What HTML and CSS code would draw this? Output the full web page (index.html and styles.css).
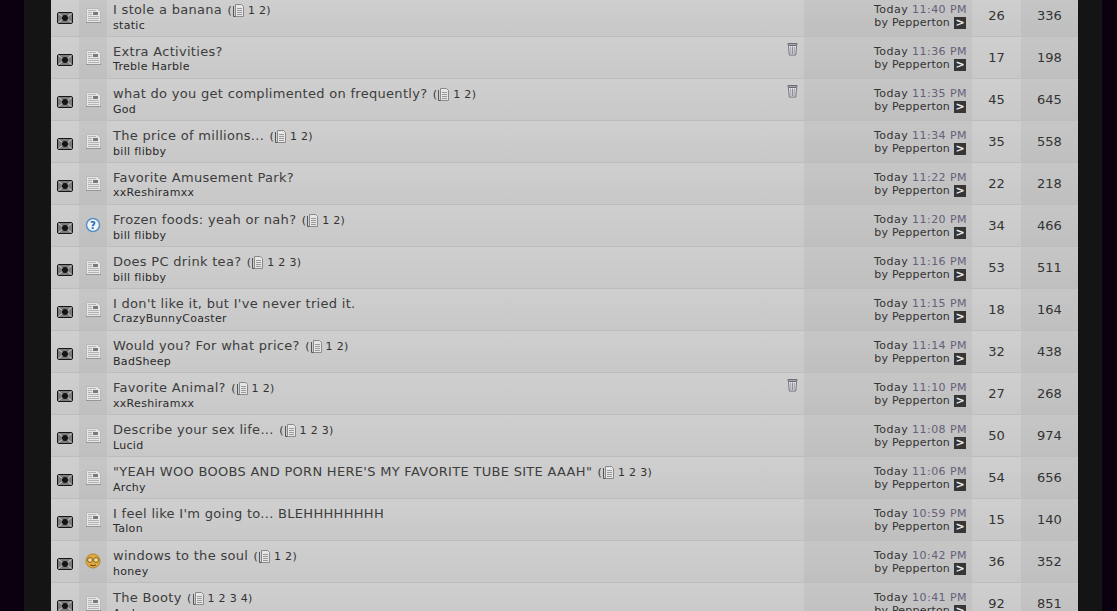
FILE: index.html

```html
<!DOCTYPE html>
<html lang="en">
<head>
<meta charset="UTF-8">
<title>Forum threads</title>
<link rel="stylesheet" href="styles.css">
</head>
<body>

<svg class="defs" width="0" height="0">
  <symbol id="env" viewBox="0 0 16 12">
    <rect x="0.500" y="0.500" width="15" height="11" rx="1.500" fill="#7c7c7c" stroke="#161616"/>
    <path d="M1.500 1.500l4.500 3.500M14.500 1.500l-4.500 3.500M1.500 10.500l4.500-3.500M14.500 10.500l-4.500-3.500" stroke="#d0d0d0"/>
    <circle cx="8" cy="6" r="3" fill="#141414"/>
  </symbol>
  <symbol id="doc" viewBox="0 0 15 15">
    <path d="M.5 .5h10.500l3.500 3v11h-14z" fill="#e6e6e6" stroke="#b8b8b8"/>
    <path d="M0 14.500h15" stroke="#969696"/>
    <path d="M2 2.500h8M2 4.500h4M2 6.500h4M2 8.500h11M2 10.500h11M2 12.500h11" stroke="#b4b4b4"/>
    <rect x="7" y="4" width="5" height="3" fill="#7a7a7a"/>
  </symbol>
  <symbol id="page" viewBox="0 0 11 13">
    <path d="M2.500 .5h6l2 2v10h-8z" fill="#e6e6e6" stroke="#8a8a8a"/>
    <path d="M.5 2v10.500h2" fill="none" stroke="#555"/>
    <path d="M4 4.500h5M4 6.500h5M4 8.500h5M4 10.500h5" stroke="#999"/>
  </symbol>
  <symbol id="trash" viewBox="0 0 11 14">
    <path d="M1 1.500h9v1.500h-9z" fill="#ddd" stroke="#6d6a78"/>
    <path d="M1.500 3.500h8l-.8 9.500H2.300z" fill="#f1f1f1" stroke="#6d6a78"/>
    <path d="M3.700 4.500l.3 7.500M5.500 4.500v7.500M7.300 4.500l-.3 7.500" stroke="#8d8a9e"/>
  </symbol>
</svg>

<div class="wrap">
  <div class="threads" id="threads"></div>
</div>

<script>
  var rows = [
    ['I stole a banana', 'static', '11:40 PM', 26, 336, 2, 'doc', 0],
    ['Extra Activities?', 'Treble Harble', '11:36 PM', 17, 198, 0, 'doc', 1],
    ['what do you get complimented on frequently?', 'God', '11:35 PM', 45, 645, 2, 'doc', 1],
    ['The price of millions...', 'bill flibby', '11:34 PM', 35, 558, 2, 'doc', 0],
    ['Favorite Amusement Park?', 'xxReshiramxx', '11:22 PM', 22, 218, 0, 'doc', 0],
    ['Frozen foods: yeah or nah?', 'bill flibby', '11:20 PM', 34, 466, 2, 'help', 0],
    ['Does PC drink tea?', 'bill flibby', '11:16 PM', 53, 511, 3, 'doc', 0],
    ["I don't like it, but I've never tried it.", 'CrazyBunnyCoaster', '11:15 PM', 18, 164, 0, 'doc', 0],
    ['Would you? For what price?', 'BadSheep', '11:14 PM', 32, 438, 2, 'doc', 0],
    ['Favorite Animal?', 'xxReshiramxx', '11:10 PM', 27, 268, 2, 'doc', 1],
    ['Describe your sex life...', 'Lucid', '11:08 PM', 50, 974, 3, 'doc', 0],
    ['"YEAH WOO BOOBS AND PORN HERE\'S MY FAVORITE TUBE SITE AAAH"', 'Archy', '11:06 PM', 54, 656, 3, 'doc', 0],
    ["I feel like I'm going to... BLEHHHHHHHH", 'Talon', '10:59 PM', 15, 140, 0, 'doc', 0],
    ['windows to the soul', 'honey', '10:42 PM', 36, 352, 2, 'smile', 0],
    ['The Booty', 'Archy', '10:41 PM', 92, 851, 4, 'doc', 0]
  ];

  var icons = {
    doc: '<svg class="ico-doc"><use href="#doc"/></svg>',
    help: '<svg class="ico-face" viewBox="0 0 16 16"><circle cx="8" cy="8" r="6.500" fill="#eef4fa" stroke="#5b92c6" stroke-width="1.500"/><text x="8" y="11.500" text-anchor="middle" class="q">?</text></svg>',
    smile: '<svg class="ico-face" viewBox="0 0 16 16"><circle cx="8" cy="8" r="7" fill="#e3ab3e" stroke="#b5812a"/><circle cx="5" cy="7" r="2.400" fill="#f6dd92" stroke="#5a4520" stroke-width=".8"/><circle cx="11" cy="7" r="2.400" fill="#f6dd92" stroke="#5a4520" stroke-width=".8"/><path d="M5 12q3 1.500 6 0" fill="none" stroke="#5a4520"/></svg>'
  };

  var html = '';
  rows.forEach(function (r) {
    var pages = '';
    if (r[5]) {
      pages = ' <span class="pages">(<svg class="ico-page"><use href="#page"/></svg> ';
      for (var i = 1; i <= r[5]; i++) pages += i + (i < r[5] ? ' ' : '');
      pages += ')</span>';
    }
    html += '<div class="row">' +
      '<div class="cell c-env"><svg class="ico-env"><use href="#env"/></svg></div>' +
      '<div class="cell c-icon alt">' + icons[r[6]] + '</div>' +
      '<div class="cell c-title"><div class="title"><a>' + r[0] + '</a>' + pages + '</div><div class="starter">' + r[1] + '</div>' +
      (r[7] ? '<svg class="ico-trash"><use href="#trash"/></svg>' : '') + '</div>' +
      '<div class="cell c-last alt"><div class="when">Today <span class="time">' + r[2] + '</span></div><div class="who"><span>by Pepperton</span><span class="go">&gt;</span></div></div>' +
      '<div class="cell c-num">' + r[3] + '</div>' +
      '<div class="cell c-num2 alt">' + r[4] + '</div>' +
      '</div>';
  });
  document.getElementById('threads').innerHTML = html;
</script>

</body>
</html>
```

FILE: styles.css

```css
html, body {
  margin: 0;
  height: 611px;
  overflow: hidden;
  background: #0a0010;
}

.defs {
  display: block;
  height: 0;
}

.wrap {
  width: 1027px;
  margin: 0 auto 0 24px;
  padding: 0 24px 0 27px;
  background: #141414;
}

.threads {
  margin-top: -5px;
  font-family: "DejaVu Sans", Verdana, sans-serif;
  color: #333;
}

.row {
  display: grid;
  grid-template-columns: 28px 28px 697px 168px 49px 57px;
  height: 41px;
  border-bottom: 1px solid #bdbdbd;
  background: linear-gradient(#cfcfcf, #c8c8c8);
}

.cell {
  display: flex;
  align-items: center;
  justify-content: center;
}

.alt {
  background: linear-gradient(#c6c6c6, #bfbfbf);
}

.c-env {
  padding-top: 4px;
}

.c-icon {
  padding-bottom: 1px;
}

.c-title {
  position: relative;
  display: block;
  padding: 7px 6px 0;
  font-size: 13px;
  line-height: 16px;
  letter-spacing: 0.3px;
}

.title a {
  color: #3d3d3d;
}

.pages {
  font-size: 11px;
  color: #333;
  margin-left: 1px;
}

.starter {
  font-size: 11px;
  line-height: 13px;
  color: #2a2a2a;
  letter-spacing: 0.3px;
}

.c-last {
  display: block;
  padding: 8px 5px 0 0;
  text-align: right;
  font-size: 11px;
  line-height: 13px;
  color: #333;
}

.when {
  letter-spacing: 0.45px;
}

.who {
  display: flex;
  justify-content: flex-end;
  align-items: flex-start;
  gap: 4px;
  height: 13px;
  letter-spacing: 0.2px;
}

.time {
  color: #66607a;
}

.go {
  width: 12px;
  height: 12px;
  line-height: 12px;
  margin: 1px 1px 0 0;
  background: #363636;
  color: #eee;
  text-align: center;
  font-size: 11px;
  font-weight: bold;
  letter-spacing: 0;
}

.c-num, .c-num2 {
  font-size: 13px;
  color: #333;
}

.ico-env {
  width: 16px;
  height: 12px;
}

.ico-doc {
  width: 15px;
  height: 15px;
}

.ico-face {
  width: 16px;
  height: 16px;
}

.q {
  font: bold 10px "DejaVu Sans", sans-serif;
  fill: #2c6aa5;
}

.ico-page {
  width: 11px;
  height: 13px;
  margin-left: 1px;
  vertical-align: -3px;
}

.ico-trash {
  position: absolute;
  top: 5px;
  right: 6px;
  width: 11px;
  height: 14px;
}
```
